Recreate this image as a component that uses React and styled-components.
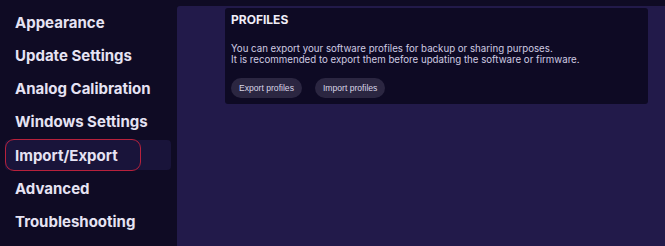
import React from 'react';
import styled, { createGlobalStyle } from 'styled-components';

const GlobalStyle = createGlobalStyle`
  html, body {
    margin: 0;
    padding: 0;
    background: #0f0b24;
    font-family: Inter, "Noto Sans", sans-serif;
  }
`;

const Layout = styled.div`
  display: flex;
  width: 665px;
  height: 246px;
  overflow: hidden;
  background: #0f0b24;
`;

const Sidebar = styled.nav`
  width: 177px;
  flex-shrink: 0;
  display: flex;
  flex-direction: column;
  gap: 3.3px;
  padding: 7px 6px 0 5px;
  box-sizing: border-box;
`;

const NavItem = styled.div`
  position: relative;
  height: 30px;
  display: flex;
  align-items: center;
  padding-left: 10px;
  font-size: 15px;
  font-weight: 700;
  color: #e6e3f3;
  border-radius: 4px;
  background: ${p => (p.$active ? '#19143a' : 'transparent')};
`;

const Highlight = styled.span`
  position: absolute;
  left: 0;
  top: -1px;
  width: 136px;
  height: 32px;
  border: 1.5px solid #b8213c;
  border-radius: 9px;
  box-sizing: border-box;
`;

const Main = styled.main`
  flex: 1;
  margin-top: 6px;
  background: #221a4a;
  padding: 2px 12px 0 48px;
  border-top-left-radius: 3px;
`;

const Card = styled.section`
  width: 423px;
  height: 96px;
  box-sizing: border-box;
  background: #0e0a24;
  border-radius: 3px;
  padding: 5px 6px 0;
`;

const Title = styled.h2`
  margin: 0;
  font-size: 12px;
  font-weight: 700;
  color: #f0eef8;
  line-height: 14px;
`;

const Description = styled.p`
  margin: 15.5px 0 0;
  font-size: 9.7px;
  line-height: 11px;
  color: #cfcbe2;
`;

const Buttons = styled.div`
  display: flex;
  gap: 13px;
  margin-top: 13.5px;
`;

const Button = styled.button`
  height: 20px;
  padding: 0 8px;
  border: none;
  border-radius: 10px;
  background: #2b2641;
  color: #d8d5e6;
  font-family: "Liberation Sans", Arial, sans-serif;
  font-size: 8.6px;
  cursor: pointer;
`;

const items = [
  'Appearance',
  'Update Settings',
  'Analog Calibration',
  'Windows Settings',
  'Import/Export',
  'Advanced',
  'Troubleshooting',
];

export default function App() {
  return (
    <Layout>
      <GlobalStyle />
      <Sidebar>
        {items.map(item => (
          <NavItem key={item} $active={item === 'Import/Export'}>
            {item}
            {item === 'Import/Export' && <Highlight />}
          </NavItem>
        ))}
      </Sidebar>
      <Main>
        <Card>
          <Title>PROFILES</Title>
          <Description>
            You can export your software profiles for backup or sharing purposes.
            <br />
            It is recommended to export them before updating the software or firmware.
          </Description>
          <Buttons>
            <Button>Export profiles</Button>
            <Button>Import profiles</Button>
          </Buttons>
        </Card>
      </Main>
    </Layout>
  );
}
